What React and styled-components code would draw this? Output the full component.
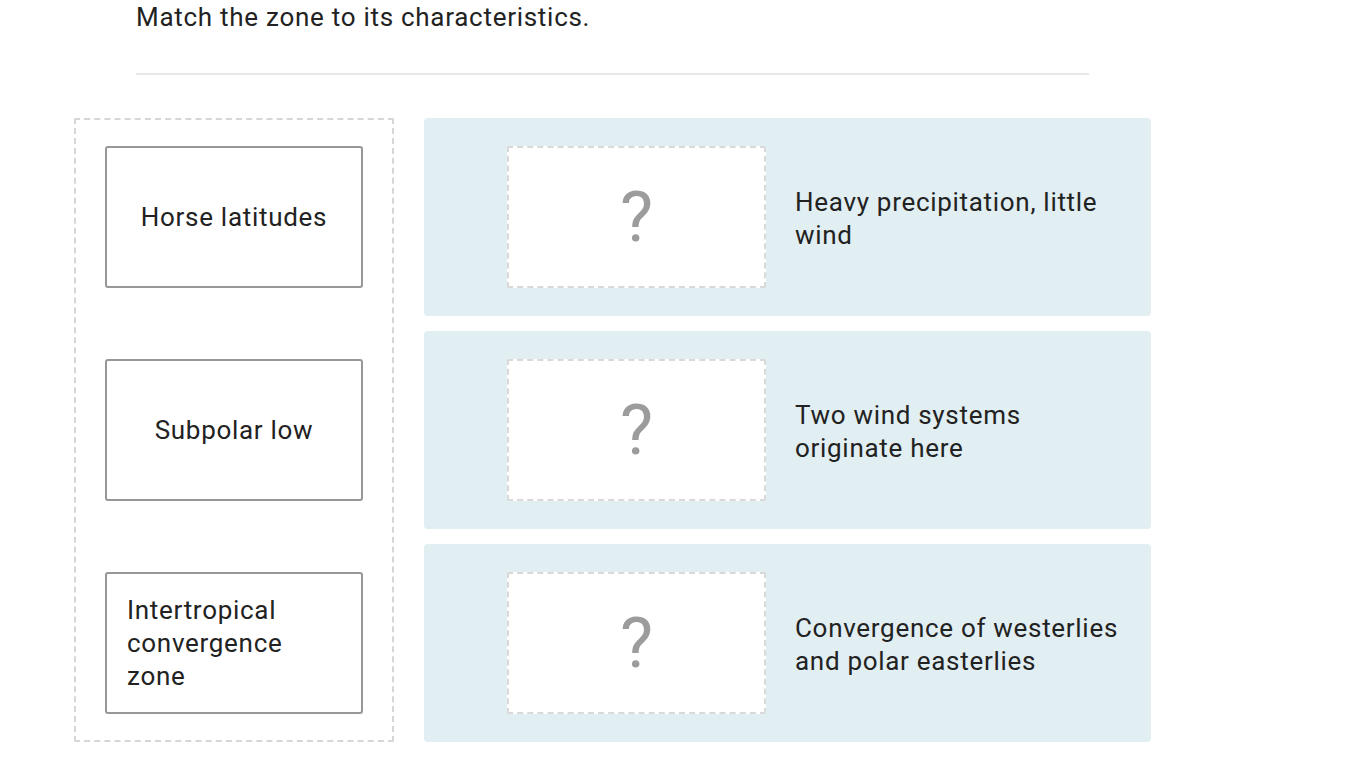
import React from 'react';
import styled, { createGlobalStyle } from 'styled-components';

const GlobalStyle = createGlobalStyle`
  body {
    margin: 0;
    background: #fff;
    font-family: Roboto, "Liberation Sans", sans-serif;
    color: #222;
  }
`

const Page = styled.div`
  width: 1366px;
  height: 768px;
  overflow: hidden;
`

const Header = styled.div`
  padding-left: 136px;
  width: 953px;
`

const Title = styled.h1`
  margin: 0;
  padding-top: 1px;
  font-size: 26px;
  line-height: 32px;
  letter-spacing: 0.72px;
  font-weight: 400;
  color: #222;
`

const Divider = styled.hr`
  margin: 40px 0 0;
  border: none;
  height: 2px;
  background: #e8e8e8;
`

const Board = styled.div`
  display: flex;
  align-items: flex-start;
  gap: 30px;
  padding: 43px 0 0 74px;
`

const Bank = styled.div`
  width: 320px;
  box-sizing: border-box;
  border: 2px dashed #d6d6d6;
  border-radius: 2px;
  padding: 26px 29px;
  display: flex;
  flex-direction: column;
  gap: 71px;
`

const Card = styled.div`
  height: 142px;
  box-sizing: border-box;
  border: 2px solid #979797;
  border-radius: 3px;
  background: #fff;
  padding: 0 20px;
  display: flex;
  align-items: center;
  justify-content: center;
  text-align: center;
  font-size: 26px;
  line-height: 33px;
  letter-spacing: 0.7px;
  color: #222;
`

const CardLabel = styled.span`
  display: inline-block;
  text-align: left;
`

const Targets = styled.div`
  display: flex;
  flex-direction: column;
  gap: 15px;
`

const Row = styled.div`
  width: 727px;
  height: 198px;
  box-sizing: border-box;
  background: #e1eef2;
  border-radius: 4px;
  padding: 0 20px 0 83px;
  display: flex;
  align-items: center;
`

const DropZone = styled.div`
  flex: none;
  width: 259px;
  height: 142px;
  box-sizing: border-box;
  border: 2px dashed #d9d9d9;
  border-radius: 2px;
  background: #fff;
  display: flex;
  align-items: center;
  justify-content: center;
  font-size: 70px;
  line-height: 1;
  color: #9c9c9c;
  font-weight: 400;
`

const Description = styled.div`
  margin-left: 29px;
  padding-top: 4px;
  font-size: 26px;
  line-height: 33px;
  letter-spacing: 0.7px;
  color: #222;
`

const zones = ['Horse latitudes', 'Subpolar low', 'Intertropical convergence zone']

const descriptions = [
  'Heavy precipitation, little wind',
  'Two wind systems originate here',
  'Convergence of westerlies and polar easterlies',
]

function App() {
  return (
    <Page>
      <GlobalStyle />
      <Header>
        <Title>Match the zone to its characteristics.</Title>
        <Divider />
      </Header>
      <Board>
        <Bank>
          {zones.map((z) => (
            <Card key={z}>
              <CardLabel>{z}</CardLabel>
            </Card>
          ))}
        </Bank>
        <Targets>
          {descriptions.map((d) => (
            <Row key={d}>
              <DropZone>?</DropZone>
              <Description>{d}</Description>
            </Row>
          ))}
        </Targets>
      </Board>
    </Page>
  );
}

export default App;
